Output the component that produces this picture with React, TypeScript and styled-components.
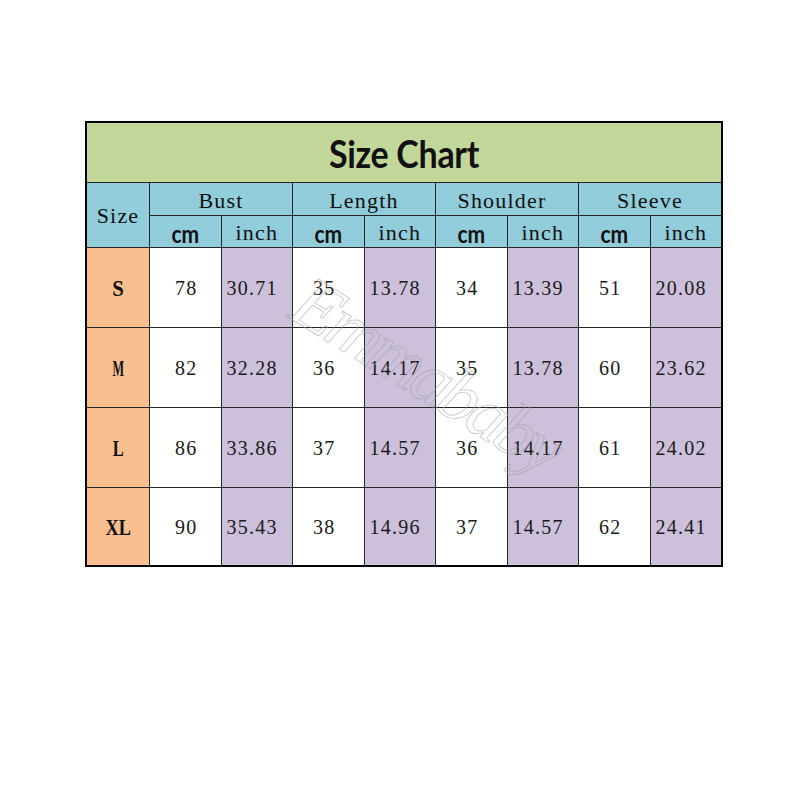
import React from "react";
import styled, { createGlobalStyle } from "styled-components";

const Global = createGlobalStyle`
  html, body { margin: 0; padding: 0; background: #ffffff; }
  * { box-sizing: border-box; }
`;

const SERIF = `"Liberation Serif", "DejaVu Serif", serif`;
const SANS = `Lato, "Open Sans", "Liberation Sans", sans-serif`;

const Page = styled.div`
  width: 800px;
  height: 800px;
  padding: 121px 0 0 85px;
  background: #ffffff;
`;

const Chart = styled.div`
  position: relative;
  width: 638px;
  display: grid;
  grid-template-columns: 62px repeat(8, 1fr);
  grid-template-rows: 59px 32px 31px 79px 79px 79px 77px;
  gap: 1px;
  background: #262626;
  border: 2px solid #000000;
  overflow: hidden;
`;

const Cell = styled.div<{ $bg: string }>`
  background: ${(p) => p.$bg};
  display: flex;
  align-items: center;
  justify-content: center;
  color: #141414;
  white-space: nowrap;
  line-height: 1;
`;

const TitleCell = styled(Cell)`
  grid-column: 1 / -1;
  padding-top: 1px;
`;

const TitleText = styled.span`
  display: inline-block;
  font-family: ${SANS};
  font-weight: 700;
  font-size: 34px;
  letter-spacing: -0.3px;
  color: #111111;
  transform: scaleY(1.12);
`;

const SizeHead = styled(Cell)`
  grid-row: span 2;
  padding-top: 2px;
`;

const GroupHead = styled(Cell)<{ $shift?: number }>`
  grid-column: span 2;
  padding-top: 4px;
  padding-right: ${(p) => p.$shift ?? 0}px;
`;

const SerifHead = styled.span`
  font-family: ${SERIF};
  font-size: 22px;
  letter-spacing: 1.2px;
  color: #111111;
`;

const UnitHead = styled(Cell)`
  padding-top: 2px;
`;

const CmText = styled.span`
  display: inline-block;
  font-family: ${SANS};
  font-weight: 700;
  font-size: 21px;
  line-height: 1;
  color: #111111;
  transform: scaleY(1.2);
`;

const SizeCell = styled(Cell)``;

const SizeText = styled.span<{ $squeeze: number }>`
  display: inline-block;
  font-family: ${SERIF};
  font-weight: 700;
  font-size: 22px;
  color: #111111;
  transform: scale(${(p) => p.$squeeze}, 1.08);
`;

const ValueCell = styled(Cell)<{ $pad: number }>`
  justify-content: flex-start;
  padding-left: ${(p) => p.$pad}px;
`;

const ValueText = styled.span`
  font-family: ${SERIF};
  font-size: 20px;
  letter-spacing: 1.25px;
  color: #1a1a1a;
`;

const Watermark = styled.div`
  position: absolute;
  left: 340px;
  top: 252px;
  transform: translate(-50%, -50%) rotate(32deg);
  font-family: ${SERIF};
  font-style: italic;
  font-size: 74px;
  letter-spacing: -4px;
  color: transparent;
  -webkit-text-stroke: 1px rgba(160, 160, 160, 0.5);
  pointer-events: none;
  white-space: nowrap;
  z-index: 2;
`;

const C = {
  green: "#c4d79b",
  blue: "#92cddc",
  orange: "#fabf8f",
  purple: "#ccc0da",
  white: "#ffffff",
};

type Row = { size: string; squeeze: number; values: string[] };

const groups: { label: string; shift?: number }[] = [
  { label: "Bust" },
  { label: "Length" },
  { label: "Shoulder", shift: 10 },
  { label: "Sleeve" },
];

const rows: Row[] = [
  { size: "S", squeeze: 0.95, values: ["78", "30.71", "35", "13.78", "34", "13.39", "51", "20.08"] },
  { size: "M", squeeze: 0.56, values: ["82", "32.28", "36", "14.17", "35", "13.78", "60", "23.62"] },
  { size: "L", squeeze: 0.75, values: ["86", "33.86", "37", "14.57", "36", "14.17", "61", "24.02"] },
  { size: "XL", squeeze: 0.83, values: ["90", "35.43", "38", "14.96", "37", "14.57", "62", "24.41"] },
];

const padFor = (i: number) => {
  if (i % 2 === 1) return 5;
  return i === 0 ? 25 : 20;
};

export default function App() {
  return (
    <>
      <Global />
      <Page>
        <Chart>
          <TitleCell $bg={C.green}>
            <TitleText>Size Chart</TitleText>
          </TitleCell>
          <SizeHead $bg={C.blue}>
            <SerifHead>Size</SerifHead>
          </SizeHead>
          {groups.map((g) => (
            <GroupHead key={g.label} $bg={C.blue} $shift={g.shift}>
              <SerifHead>{g.label}</SerifHead>
            </GroupHead>
          ))}
          {groups.map((g) => (
            <React.Fragment key={g.label + "-u"}>
              <UnitHead $bg={C.blue}>
                <CmText>cm</CmText>
              </UnitHead>
              <UnitHead $bg={C.blue}>
                <SerifHead>inch</SerifHead>
              </UnitHead>
            </React.Fragment>
          ))}
          {rows.map((r) => (
            <React.Fragment key={r.size}>
              <SizeCell $bg={C.orange}>
                <SizeText $squeeze={r.squeeze}>{r.size}</SizeText>
              </SizeCell>
              {r.values.map((v, i) => (
                <ValueCell key={i} $bg={i % 2 === 1 ? C.purple : C.white} $pad={padFor(i)}>
                  <ValueText>{v}</ValueText>
                </ValueCell>
              ))}
            </React.Fragment>
          ))}
          <Watermark>Emmababy</Watermark>
        </Chart>
      </Page>
    </>
  );
}
